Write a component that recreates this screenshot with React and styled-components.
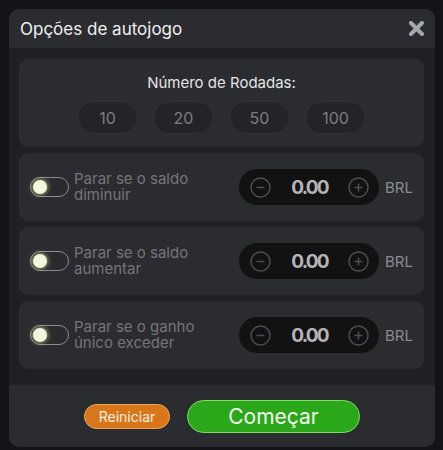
import React from 'react';
import styled, { createGlobalStyle } from 'styled-components';

const GlobalStyle = createGlobalStyle`
  html,
  body {
    margin: 0;
    padding: 0;
    background: #131417;
    font-family: Inter, 'Noto Sans', 'Liberation Sans', sans-serif;
  }
`;

const Modal = styled.div`
  width: 426px;
  margin: 9px 0 0 9px;
  border-radius: 10px;
  overflow: hidden;
  background: #1f2023;
`;

const Header = styled.div`
  display: flex;
  align-items: center;
  justify-content: space-between;
  height: 39px;
  padding: 0 11px 0 11px;
  background: #2b2c30;
`;

const Title = styled.h1`
  margin: 0;
  font-size: 17px;
  font-weight: 400;
  color: #f0f0f2;
`;

const Close = styled.button`
  display: flex;
  padding: 0;
  border: 0;
  background: none;
  cursor: pointer;
`;

const Body = styled.div`
  display: flex;
  flex-direction: column;
  gap: 6px;
  padding: 11px 11px 16px 10px;
`;

const Section = styled.div`
  border-radius: 9px;
  background: #2b2c30;
`;

const RoundsSection = styled(Section)`
  display: flex;
  flex-direction: column;
  align-items: center;
  gap: 8px;
  padding: 14px 0 13px;
`;

const SectionTitle = styled.div`
  font-size: 15px;
  line-height: 20px;
  color: #e4e4e6;
`;

const Rounds = styled.div`
  display: flex;
  gap: 15px;
`;

const RoundButton = styled.button`
  width: 61px;
  height: 33px;
  border: 1px solid #313236;
  border-radius: 17px;
  background: #232427;
  color: #7c7d82;
  font-family: inherit;
  font-size: 16px;
  cursor: pointer;
`;

const Row = styled(Section)`
  display: flex;
  align-items: center;
  height: 68px;
  padding: 0 11px;
`;

const Toggle = styled.div`
  box-sizing: border-box;
  display: flex;
  align-items: center;
  flex-shrink: 0;
  width: 39px;
  height: 20px;
  padding: 0 2px;
  border: 1.5px solid #8c8d90;
  border-radius: 10px;
  background: #2a2b2e;

  &::before {
    content: '';
    width: 14px;
    height: 14px;
    border-radius: 50%;
    background: #f2f6de;
    box-shadow: 0 0 4px 1px rgba(190, 215, 130, 0.7);
  }
`;

const Label = styled.div`
  margin-left: 5px;
  font-size: 15px;
  line-height: 16px;
  color: #74757a;
`;

const Amount = styled.div`
  display: flex;
  align-items: center;
  justify-content: space-between;
  width: 140px;
  height: 36px;
  margin-left: auto;
  padding: 0 10px 0 11px;
  box-sizing: border-box;
  border-radius: 18px;
  background: #121213;
`;

const Step = styled.button`
  display: flex;
  padding: 0;
  border: 0;
  background: none;
  cursor: pointer;
`;

const Value = styled.div`
  font-size: 19px;
  font-weight: 700;
  letter-spacing: -1.8px;
  color: #b4b4b6;
`;

const Currency = styled.div`
  margin-left: 6px;
  font-size: 15px;
  color: #8a8b90;
`;

const Footer = styled.div`
  display: flex;
  align-items: center;
  justify-content: center;
  gap: 17px;
  height: 62px;
  background: #2b2c30;
`;

const ResetButton = styled.button`
  width: 86px;
  height: 25px;
  border: 1.5px solid #f2a65a;
  border-radius: 13px;
  background: #d8761a;
  color: #fdf1e2;
  font-family: inherit;
  font-size: 14px;
  cursor: pointer;
`;

const StartButton = styled.button`
  width: 173px;
  height: 33px;
  border: 1.5px solid #7ede62;
  border-radius: 17px;
  background: #2ba81a;
  color: #f4fff0;
  font-family: inherit;
  font-size: 21px;
  cursor: pointer;
`;

const CircleIcon = ({ plus }) => (
  <svg width="21" height="21" viewBox="0 0 21 21">
    <circle cx="10.5" cy="10.5" r="9.5" fill="none" stroke="#4c4d50" strokeWidth="1.5" />
    <path d="M6.5 10.5h8" stroke="#4c4d50" strokeWidth="1.5" />
    {plus && <path d="M10.5 6.5v8" stroke="#4c4d50" strokeWidth="1.5" />}
  </svg>
);

const StopRow = ({ label }) => (
  <Row>
    <Toggle />
    <Label>{label[0]}<br />{label[1]}</Label>
    <Amount>
      <Step aria-label="diminuir"><CircleIcon /></Step>
      <Value>0.00</Value>
      <Step aria-label="aumentar"><CircleIcon plus /></Step>
    </Amount>
    <Currency>BRL</Currency>
  </Row>
);

const rows = [
  ['Parar se o saldo', 'diminuir'],
  ['Parar se o saldo', 'aumentar'],
  ['Parar se o ganho', 'único exceder'],
];

export default function App() {
  return (
    <>
      <GlobalStyle />
      <Modal>
        <Header>
          <Title>Opções de autojogo</Title>
          <Close aria-label="Fechar">
            <svg width="15" height="15" viewBox="0 0 15 15">
              <path d="M2 2l11 11M13 2L2 13" stroke="#a3a7ae" strokeWidth="4" strokeLinecap="round" />
            </svg>
          </Close>
        </Header>
        <Body>
          <RoundsSection>
            <SectionTitle>Número de Rodadas:</SectionTitle>
            <Rounds>
              {[10, 20, 50, 100].map(n => (
                <RoundButton key={n}>{n}</RoundButton>
              ))}
            </Rounds>
          </RoundsSection>
          {rows.map(label => (
            <StopRow key={label.join(' ')} label={label} />
          ))}
        </Body>
        <Footer>
          <ResetButton>Reiniciar</ResetButton>
          <StartButton>Começar</StartButton>
        </Footer>
      </Modal>
    </>
  );
}
